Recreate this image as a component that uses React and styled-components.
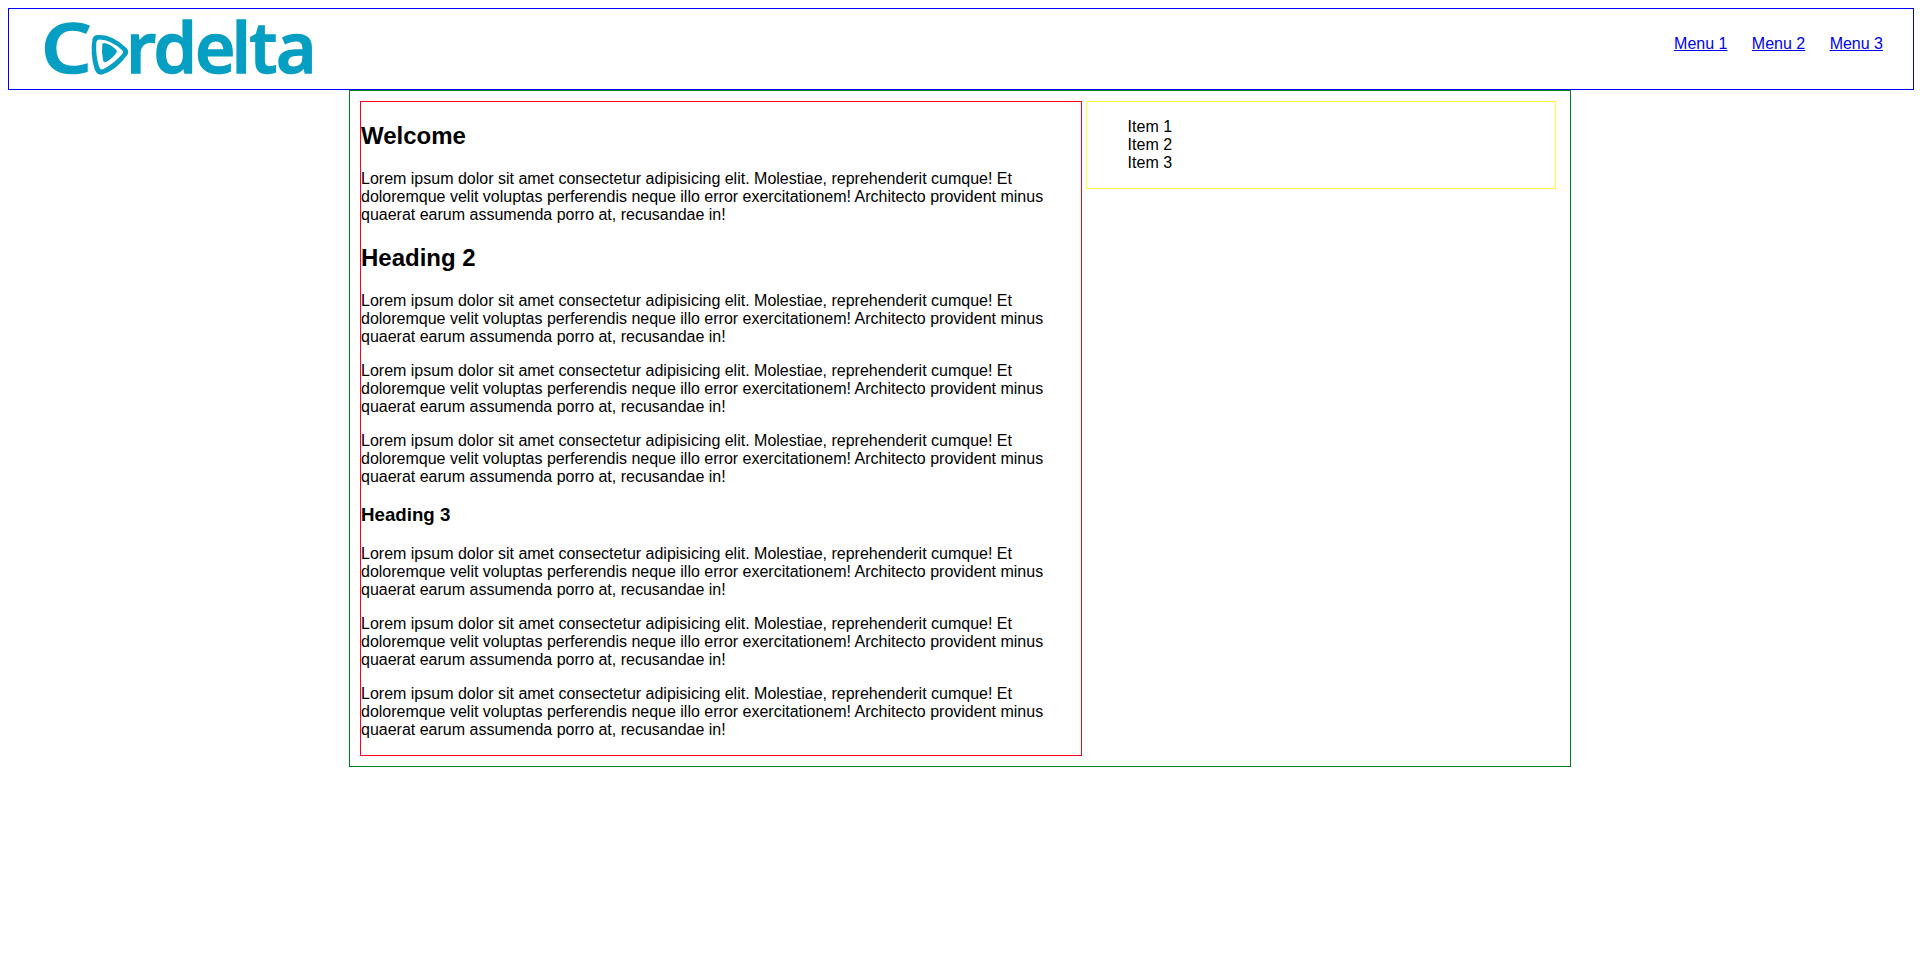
import React from "react";
import styled, { createGlobalStyle } from "styled-components";

const GlobalStyle = createGlobalStyle`
  body {
    margin: 8px 6px 8px 8px;
    background: #fff;
    color: #000;
    font: 16px/18px "Liberation Sans", Arial, sans-serif;
  }
`;

const Header = styled.header`
  box-sizing: border-box;
  display: flex;
  justify-content: space-between;
  align-items: flex-start;
  height: 82px;
  padding: 0 30px;
  border: 1px solid #00f;
`;

const Logo = styled.svg`
  display: block;
  width: 290px;
  height: 80px;
  overflow: visible;
  color: #049fc2;
`;

const LogoText = styled.text`
  font-family: "Open Sans", "Noto Sans", sans-serif;
  font-weight: 600;
  font-size: 70px;
  fill: currentColor;
  stroke: currentColor;
  stroke-width: 1.6px;
`;

const Menu = styled.nav`
  display: flex;
  gap: 24.4px;
  padding-top: 26px;
`;

const MenuLink = styled.a`
  color: #0000ee;
  text-decoration: underline;
`;

const Container = styled.main`
  box-sizing: border-box;
  display: flex;
  align-items: flex-start;
  gap: 4px;
  width: 1222px;
  height: 677px;
  margin-left: 341px;
  padding: 10px;
  border: 1px solid #008020;
`;

const Content = styled.section`
  box-sizing: border-box;
  width: 722px;
  height: 655px;
  border: 1px solid #ff0020;
  display: flow-root;
`;

const Sidebar = styled.aside`
  box-sizing: border-box;
  width: 470px;
  height: 88px;
  border: 1px solid #ffff40;
`;

const Title = styled.h2`
  margin: 20px 0;
  font-size: 24px;
  line-height: 28px;
`;

const Subtitle = styled.h3`
  margin: 18px 0 19px;
  font-size: 18.72px;
  line-height: 22px;
`;

const Paragraph = styled.p`
  margin: 16px 0;
`;

const ItemList = styled.ul`
  margin: 16px 0;
  padding-left: 40.6px;
  list-style: none;
`;

const lorem =
  "Lorem ipsum dolor sit amet consectetur adipisicing elit. Molestiae, reprehenderit cumque! Et doloremque velit voluptas perferendis neque illo error exercitationem! Architecto provident minus quaerat earum assumenda porro at, recusandae in!";

export default function App() {
  return (
    <>
      <GlobalStyle />
      <Header>
        <Logo viewBox="39 9 290 80" role="img" aria-label="Cordelta">
          <LogoText transform="translate(41 73) scale(1.14 0.99)">C</LogoText>
          <LogoText y="72.500" x="126 153.500 195 231.5 249.5 276">rdelta</LogoText>
          <path
            fill="currentColor"
            fillRule="evenodd"
            d="M98 35 Q112 34 126.5 48 Q130 52 126.5 56 Q116 70 103 74.3 Q97 76 94.5 69 Q90 53 92.5 39 Q93.5 35 98 35Z M99.500 39.5 Q96.500 39.5 96.3 43 Q95.5 55 99 66.500 Q100.500 71 104.500 68.5 Q114.500 63 122.200 54 Q124 52 122 50 Q111 40 99.500 39.5Z"
          />
          <path
            fill="currentColor"
            d="M104 43 Q110 43.500 116.3 50 Q117.5 51.5 116.3 53 Q112 59 106 62 Q103.6 63 103 60 Q101.300 52 102.300 44.5 Q102.500 43 104 43Z"
          />
        </Logo>
        <Menu>
          <MenuLink href="#">Menu 1</MenuLink>
          <MenuLink href="#">Menu 2</MenuLink>
          <MenuLink href="#">Menu 3</MenuLink>
        </Menu>
      </Header>
      <Container>
        <Content>
          <Title>Welcome</Title>
          <Paragraph>{lorem}</Paragraph>
          <Title>Heading 2</Title>
          <Paragraph>{lorem}</Paragraph>
          <Paragraph>{lorem}</Paragraph>
          <Paragraph>{lorem}</Paragraph>
          <Subtitle>Heading 3</Subtitle>
          <Paragraph>{lorem}</Paragraph>
          <Paragraph>{lorem}</Paragraph>
          <Paragraph>{lorem}</Paragraph>
        </Content>
        <Sidebar>
          <ItemList>
            <li>Item 1</li>
            <li>Item 2</li>
            <li>Item 3</li>
          </ItemList>
        </Sidebar>
      </Container>
    </>
  );
}
